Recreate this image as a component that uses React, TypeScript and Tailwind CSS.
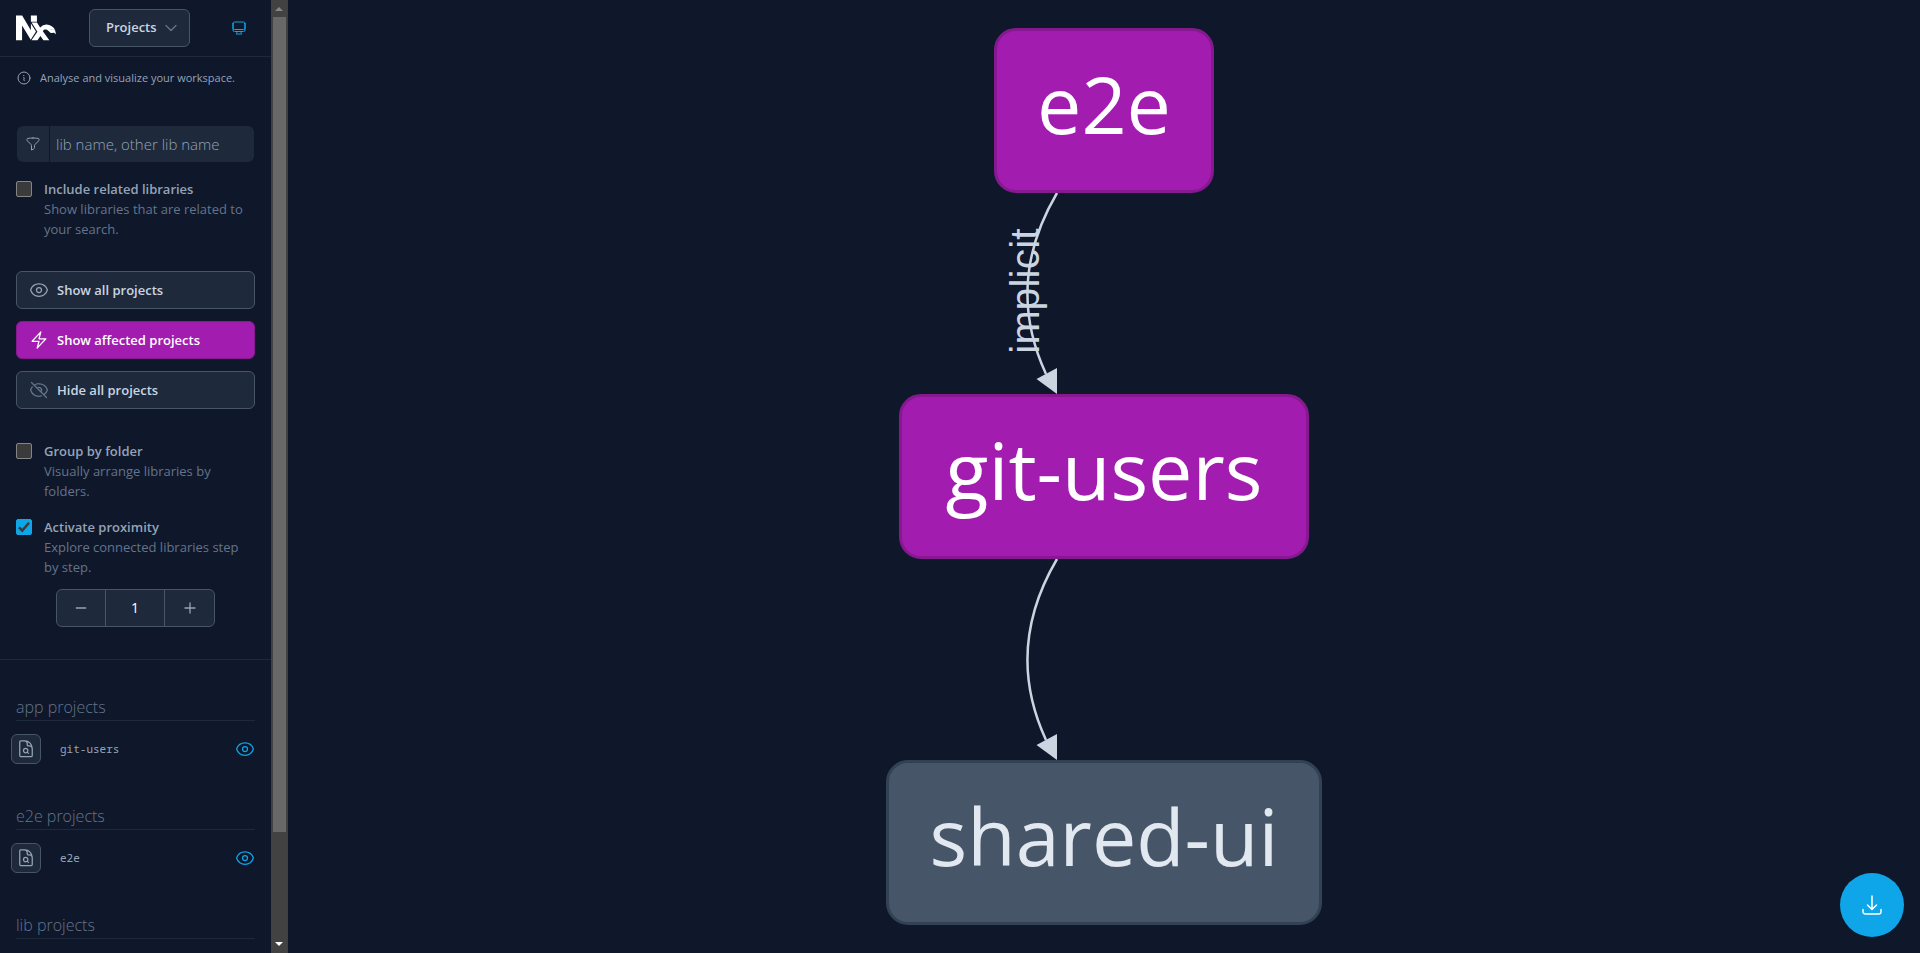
import { useState, type ComponentType, type ReactNode } from "react";
import {
  HiOutlineArrowDownTray,
  HiOutlineBolt,
  HiOutlineChevronDown,
  HiOutlineComputerDesktop,
  HiOutlineDocumentMagnifyingGlass,
  HiOutlineEye,
  HiOutlineEyeSlash,
  HiOutlineFunnel,
  HiOutlineInformationCircle,
  HiOutlineMinus,
  HiOutlinePlus,
} from "react-icons/hi2";

function NxLogo() {
  return (
    <svg viewBox="0 0 262 164" className="h-[26px] w-10 shrink-0 fill-white" role="img" aria-label="Nx">
      <polygon points="130.7 104.6 97.5 53 97.4 96.3 40.2 0 0 0 0 162.6 39.8 162.6 39.9 66.4 96.5 158.3" />
      <polygon points="97.5 41.8 137.2 41.8 137.3 0 97.5 0" />
      <path d="M198.7 86.9a23.8 23.8 0 0 0-21.900 14.400c4.800-10.800 17.100-12.100 26.100-7.700 7.900 3.900 17 5.200 24.400-.4 6.500-5 13-5.400 20-2.300 8.900 4 13 12 14.300 20.600-3.500-22.600-19.500-38.300-39.800-46.700a57 57 0 0 0-63.700 14.500L137.300 46.700H102l38.200 59.300-38.700 56.600h39l19.400-28 19.500 28h38.900l-42.600-59.900a23.800 23.800 0 0 1 22-15.800z" />
      <path d="M204 93c9 4 19 4 25.500-1.500 6-4.500 12-4.500 17.500-2 10 5.500 13.500 18 14.500 35-6-8-14-13-22-10-6 2-13 0-18-5-4.500-5-11-12-17.500-16.500z" />
    </svg>
  );
}

type OptionProps = {
  id: string;
  label: string;
  description: string;
  defaultChecked?: boolean;
};

function CheckOption({ id, label, description, defaultChecked = false }: OptionProps) {
  return (
    <div className="flex items-start gap-3">
      <span className="relative mt-0.5 flex size-4 shrink-0">
        <input
          id={id}
          type="checkbox"
          defaultChecked={defaultChecked}
          className="peer size-4 appearance-none rounded-xs border border-[#858585] bg-[#3b3b3b] checked:border-[#0ea5e9] checked:bg-[#0ea5e9]"
        />
        <svg viewBox="0 0 16 16" className="pointer-events-none absolute inset-0 hidden fill-none stroke-[#3b3b3b] stroke-[2.5] peer-checked:block">
          <path d="M3 8.300 6.300 11.600 13 3.800" />
        </svg>
      </span>
      <div>
        <label htmlFor={id} className="block text-[13px] leading-5 font-semibold text-[#94a3b8]">
          {label}
        </label>
        <p className="text-[13px] leading-5 text-[#64748b]">{description}</p>
      </div>
    </div>
  );
}

type ActionProps = {
  icon: ComponentType<{ className?: string }>;
  children: ReactNode;
  variant?: "default" | "primary" | "muted";
};

const actionStyles = {
  default: { button: "border-[#475569] bg-[#1e293b] text-[#cbd5e1]", icon: "text-[#94a3b8]" },
  primary: { button: "border-[#86198f] bg-[#a21caf] text-white", icon: "text-white" },
  muted: { button: "border-[#475569] bg-[#1e293b] text-[#cbd5e1]", icon: "text-[#64748b]" },
};

function ActionButton({ icon: Icon, children, variant = "default" }: ActionProps) {
  const style = actionStyles[variant];
  return (
    <button type="button" className={`flex h-[38px] w-full items-center gap-2 rounded-md border px-3 text-[13px] leading-5 font-semibold ${style.button}`}>
      <Icon className={`size-5 ${style.icon}`} />
      {children}
    </button>
  );
}

function ProjectGroup({ title, projects }: { title: string; projects: string[] }) {
  return (
    <section className="h-[109px] shrink-0">
      <h2 className="mx-4 border-b border-[#1e293b] pt-[5px] pb-[3px] text-base leading-5 font-light text-[#64748b]">{title}</h2>
      <ul className="mt-[13px]">
        {projects.map((name) => (
          <li key={name} className="flex items-center pr-4 pl-[11px]">
            <button
              type="button"
              aria-label={`Focus on ${name}`}
              className="flex size-[30px] items-center justify-center rounded-md border border-[#475569] bg-[#1e293b] text-[#94a3b8]"
            >
              <HiOutlineDocumentMagnifyingGlass className="size-5" />
            </button>
            <span className="ml-[19px] flex-1 font-[Noto_Sans_Mono,DejaVu_Sans_Mono,monospace] text-[11px] text-[#94a3b8]">{name}</span>
            <button type="button" aria-label={`Toggle ${name}`} className="text-[#0ea5e9]">
              <HiOutlineEye className="size-5" />
            </button>
          </li>
        ))}
      </ul>
    </section>
  );
}

function ScrollRail() {
  return (
    <div className="flex w-4 shrink-0 flex-col items-center bg-[#424242]" aria-hidden="true">
      <svg viewBox="0 0 16 17" className="h-[17px] w-4 shrink-0 fill-[#868686]">
        <path d="M4 11h8L8 7z" />
      </svg>
      <div className="w-[13px] grow-[815] bg-[#686868]" />
      <div className="grow-[104]" />
      <svg viewBox="0 0 16 17" className="h-[17px] w-4 shrink-0 fill-white">
        <path d="M4 6h8l-4 4z" />
      </svg>
    </div>
  );
}

function Sidebar() {
  const [depth, setDepth] = useState(1);
  return (
    <aside className="flex w-72 shrink-0 border-r border-[#334155]">
      <div className="flex min-w-0 flex-1 flex-col overflow-hidden">
        <header className="flex h-[57px] shrink-0 items-center border-b border-[#1e293b] pr-6 pl-4">
          <NxLogo />
          <button
            type="button"
            className="ml-[33px] flex h-[38px] items-center gap-1.5 rounded-md border border-[#475569] bg-[#1e293b] pr-2.5 pl-4 text-[13px] font-semibold text-[#cbd5e1]"
          >
            Projects
            <HiOutlineChevronDown className="size-4 stroke-2 text-[#64748b]" />
          </button>
          <button type="button" aria-label="Theme" className="ml-auto text-[#0ea5e9]">
            <HiOutlineComputerDesktop className="size-4" />
          </button>
        </header>

        <p className="mt-[13px] flex shrink-0 items-center gap-2 px-4 text-[11px] leading-4 text-[#94a3b8]">
          <HiOutlineInformationCircle className="size-4" />
          Analyse and visualize your workspace.
        </p>

        <div className="mx-[17px] mt-10 flex h-9 shrink-0 overflow-hidden rounded-md bg-[#1e293b]">
          <label htmlFor="search" className="flex w-[33px] items-center justify-center border-r border-[#0f172a] text-[#94a3b8]">
            <HiOutlineFunnel className="size-4" aria-label="Filter" />
          </label>
          <input
            id="search"
            type="text"
            placeholder="lib name, other lib name"
            className="min-w-0 flex-1 px-1.5 text-[15px] font-light text-[#cbd5e1] placeholder-[#94a3b8] outline-none"
          />
        </div>

        <div className="mt-[17px] px-4">
          <CheckOption id="related" label="Include related libraries" description="Show libraries that are related to your search." />
        </div>

        <div className="mt-8 flex shrink-0 flex-col gap-3 px-4">
          <ActionButton icon={HiOutlineEye}>Show all projects</ActionButton>
          <ActionButton icon={HiOutlineBolt} variant="primary">
            Show affected projects
          </ActionButton>
          <ActionButton icon={HiOutlineEyeSlash} variant="muted">
            Hide all projects
          </ActionButton>
        </div>

        <div className="mt-8 flex shrink-0 flex-col gap-4 px-4">
          <CheckOption id="group" label="Group by folder" description="Visually arrange libraries by folders." />
          <CheckOption id="proximity" label="Activate proximity" description="Explore connected libraries step by step." defaultChecked />
        </div>

        <div className="mx-14 mt-3 flex h-[38px] shrink-0 divide-x divide-[#475569] overflow-hidden rounded-md border border-[#475569] bg-[#1e293b] text-[#94a3b8]">
          <button type="button" aria-label="Decrease" onClick={() => setDepth(Math.max(1, depth - 1))} className="flex w-[49px] items-center justify-center">
            <HiOutlineMinus className="size-4 stroke-2" />
          </button>
          <output className="flex flex-1 items-center justify-center text-sm text-white">{depth}</output>
          <button type="button" aria-label="Increase" onClick={() => setDepth(depth + 1)} className="flex w-[49px] items-center justify-center">
            <HiOutlinePlus className="size-4 stroke-2" />
          </button>
        </div>

        <div className="mt-8 shrink-0 border-b border-[#1e293b]" />

        <div className="mt-8 flex flex-col">
          <ProjectGroup title="app projects" projects={["git-users"]} />
          <ProjectGroup title="e2e projects" projects={["e2e"]} />
          <ProjectGroup title="lib projects" projects={[]} />
        </div>
      </div>
      <ScrollRail />
    </aside>
  );
}

function GraphNode({ className, children }: { className: string; children: string }) {
  return (
    <div className={`flex h-[165px] shrink-0 items-center justify-center rounded-[22px] border-[3px] pb-3.5 text-[79px] leading-none ${className}`}>
      {children}
    </div>
  );
}

function GraphEdge({ label }: { label?: string }) {
  return (
    <svg viewBox="0 0 208 201" className="h-[201px] w-52 shrink-0">
      <path d="M57 0Q4 90 46 181" className="fill-none stroke-[#cbd5e1] stroke-[2.5]" />
      <path d="M57 201V175L36.500 186z" className="fill-[#cbd5e1]" />
      {label && (
        <text transform="translate(39 98) rotate(-90)" textAnchor="middle" className="fill-[#cbd5e1] font-[Liberation_Sans,Arial,sans-serif] text-[41px]">
          {label}
        </text>
      )}
    </svg>
  );
}

export default function App() {
  return (
    <div className="flex h-screen overflow-hidden bg-[#0f172a] font-[Open_Sans,Noto_Sans,sans-serif]">
      <Sidebar />
      <main className="relative flex min-w-0 flex-1 flex-col items-center pt-7">
        <GraphNode className="w-[220px] border-[#86198f] bg-[#a21caf] text-white">e2e</GraphNode>
        <GraphEdge label="implicit" />
        <GraphNode className="w-[410px] border-[#86198f] bg-[#a21caf] text-white">git-users</GraphNode>
        <GraphEdge />
        <GraphNode className="w-[436px] border-[#334155] bg-[#475569] text-[#e2e8f0]">shared-ui</GraphNode>
        <button
          type="button"
          aria-label="Download"
          className="absolute right-4 bottom-4 flex size-16 items-center justify-center rounded-full bg-[#0ea5e9] text-white"
        >
          <HiOutlineArrowDownTray className="size-6" />
        </button>
      </main>
    </div>
  );
}
